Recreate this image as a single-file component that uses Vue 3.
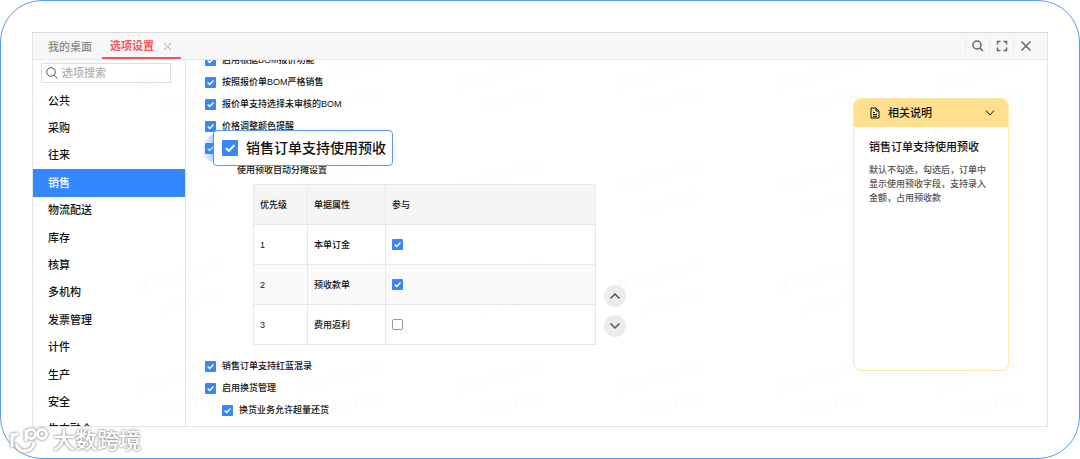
<script setup>
import { ref } from 'vue'

const menu = ['公共', '采购', '往来', '销售', '物流配送', '库存', '核算', '多机构', '发票管理', '计件', '生产', '安全', '生态融合']
const active = ref('销售')
const keyword = ref('')
const upper = ref([
  { label: '启用根据BOM报价功能', on: true },
  { label: '按照报价单BOM严格销售', on: true },
  { label: '报价单支持选择未审核的BOM', on: true },
  { label: '价格调整颜色提醒', on: true }
])
const lower = ref([
  { label: '销售订单支持红蓝混录', on: true },
  { label: '启用换货管理', on: true },
  { label: '换货业务允许超量还货', on: true, nested: true }
])
const advance = ref(true)
const rows = ref([
  { name: '本单订金', on: true },
  { name: '预收款单', on: true },
  { name: '费用返利', on: false }
])
</script>

<template>
  <div class="frame">
    <div class="window">
      <header class="tabs">
        <button class="tab" type="button">我的桌面</button>
        <div class="tab current">
          <button class="tab-name" type="button">选项设置</button>
          <button class="tab-close" type="button" aria-label="关闭标签">
            <svg width="9" height="9" viewBox="0 0 9 9"><path d="M1 1l7 7M8 1L1 8" /></svg>
          </button>
        </div>
        <div class="tools">
          <button type="button" aria-label="搜索">
            <svg width="12" height="12" viewBox="0 0 12 12"><circle cx="5" cy="5" r="4" /><path d="M8 8l3 3" /></svg>
          </button>
          <button type="button" aria-label="全屏">
            <svg width="12" height="12" viewBox="0 0 12 12"><path d="M1.5 4.5v-3h3M7.5 1.5h3v3M10.5 7.5v3h-3M4.5 10.5h-3v-3" /></svg>
          </button>
          <button type="button" aria-label="关闭">
            <svg width="12" height="12" viewBox="0 0 12 12"><path d="M1.5 1.5l9 9M10.5 1.5l-9 9" /></svg>
          </button>
        </div>
      </header>

      <div class="body">
        <svg class="stamp" aria-hidden="true">
          <defs>
            <pattern id="stamp" width="160" height="101" x="104" y="-6" patternUnits="userSpaceOnUse">
              <g transform="rotate(-15 0 40)">
                <text x="2" y="37">员工02009588</text>
                <text x="20" y="65">09251105</text>
              </g>
            </pattern>
          </defs>
          <rect width="100%" height="100%" fill="url(#stamp)" />
        </svg>

        <aside class="side">
          <label class="search">
            <svg width="12" height="12" viewBox="0 0 12 12"><circle cx="5" cy="5" r="4.3" /><path d="M8.2 8.2l3.3 3.3" /></svg>
            <input v-model="keyword" type="text" placeholder="选项搜索" aria-label="选项搜索" />
          </label>
          <nav class="menu">
            <button v-for="m in menu" :key="m" type="button" :class="{ active: m === active }" @click="active = m">{{ m }}</button>
          </nav>
        </aside>

        <main class="options">
          <label v-for="o in upper" :key="o.label" class="option">
            <input v-model="o.on" type="checkbox" /><span>{{ o.label }}</span>
          </label>
          <div class="option">
            <input v-model="advance" type="checkbox" aria-label="使用预收" />
            <label class="callout">
              <input v-model="advance" type="checkbox" /><span>销售订单支持使用预收</span>
            </label>
          </div>
          <div class="option caption">使用预收自动分摊设置</div>
          <div class="share">
            <table>
              <thead>
                <tr><th class="rank">优先级</th><th class="kind">单据属性</th><th>参与</th></tr>
              </thead>
              <tbody>
                <tr v-for="(r, i) in rows" :key="r.name">
                  <td>{{ i + 1 }}</td>
                  <td>{{ r.name }}</td>
                  <td><input v-model="r.on" type="checkbox" :aria-label="r.name" /></td>
                </tr>
              </tbody>
            </table>
            <div class="order">
              <button type="button" aria-label="上移"><svg width="12" height="8" viewBox="0 0 12 8"><path d="M1.5 6.500L6 2l4.500 4.500" /></svg></button>
              <button type="button" aria-label="下移"><svg width="12" height="8" viewBox="0 0 12 8"><path d="M1.5 1.500L6 6l4.500-4.500" /></svg></button>
            </div>
          </div>
          <div class="rest">
            <label v-for="o in lower" :key="o.label" class="option" :class="{ nested: o.nested }">
              <input v-model="o.on" type="checkbox" /><span>{{ o.label }}</span>
            </label>
          </div>
        </main>

        <section class="help">
          <header>
            <svg width="10" height="12" viewBox="0 0 10 12"><path d="M1 1h5l3 3v7H1zM6 1v3h3M3 5.500h2M3 7.500h4M3 9.300h4" /></svg>
            <h2>相关说明</h2>
            <button type="button" aria-label="收起"><svg width="10" height="8" viewBox="0 0 10 8"><path d="M1 1.500l4 4.500 4-4.500" /></svg></button>
          </header>
          <h3>销售订单支持使用预收</h3>
          <p>默认不勾选，勾选后，订单中显示使用预收字段，支持录入金额，占用预收款</p>
        </section>
      </div>
    </div>

    <div class="brand">
      <svg width="40" height="28" viewBox="0 0 40 28">
        <path d="M3 6v14M3 12q1-5 6-5M7 17q3 8 10 7 7-1 8-9" />
        <circle cx="22" cy="7" r="4.500" /><circle cx="33" cy="7" r="4.500" /><path d="M17 3v11" />
      </svg>
      <span>大数跨境</span>
    </div>
  </div>
</template>

<style>
body {
  margin: 0;
  background: #fff;
}
</style>

<style scoped>
.frame {
  position: relative;
  box-sizing: border-box;
  display: flex;
  height: 100vh;
  padding: 31px;
  border: 1px solid #5b9af0;
  border-radius: 42px;
  font: 500 9px/14px "Liberation Sans", "Noto Sans CJK SC", sans-serif;
  color: #111;
  background: #fff;
}
button {
  padding: 0;
  border: 0;
  background: none;
  font: inherit;
  color: inherit;
}
svg {
  flex: none;
  fill: none;
  stroke: currentColor;
}
.window {
  flex: 1;
  display: flex;
  flex-direction: column;
  border: 1px solid #e4e4e4;
  border-top-color: #d8d8d8;
  overflow: hidden;
}
.tabs {
  display: flex;
  height: 26px;
  border-bottom: 1px solid #e8e8e8;
  background: #f7f7f7;
  font-size: 11px;
}
.tab {
  padding: 2px 10px 0 15px;
  color: #888;
}
.tab.current {
  display: flex;
  align-items: center;
  gap: 9px;
  padding: 2px 9px 0 8px;
  border-bottom: 2px solid #f2555b;
  color: #f2555b;
}
.tab-name {
  font-weight: 700;
}
.tab-close {
  display: flex;
  color: #aaa;
}
.tools {
  display: flex;
  align-items: center;
  margin: 0 10px 0 auto;
}
.tools button {
  display: flex;
  align-items: center;
  justify-content: center;
  width: 24px;
  height: 18px;
  border-left: 1px solid #eee;
  color: #666;
}
.tools svg {
  stroke-width: 1.5;
}
.body {
  position: relative;
  flex: 1;
  display: flex;
  min-height: 0;
  overflow: hidden;
}
.stamp {
  position: absolute;
  inset: 0;
  width: 100%;
  height: 100%;
  stroke: none;
}
.stamp text {
  fill: #fbfbfb;
  font-size: 14px;
}
.side {
  position: relative;
  display: flex;
  flex-direction: column;
  width: 152px;
  border-right: 1px solid #e4e4e4;
  font-size: 11px;
}
.search {
  display: flex;
  align-items: center;
  gap: 4px;
  height: 18px;
  margin: 3px 14px 4px 8px;
  padding-left: 4px;
  border: 1px solid #ddd;
  color: #555;
}
.search input {
  flex: 1;
  min-width: 0;
  padding: 0;
  border: 0;
  outline: 0;
  background: none;
  font: inherit;
}
.search input::placeholder {
  color: #b0b0b0;
}
.menu {
  flex: 1;
  display: flex;
  flex-direction: column;
  margin-bottom: -17px;
}
.menu button {
  flex: 1;
  padding-left: 15px;
  text-align: left;
}
.menu button.active {
  background: #3388ff;
  color: #fff;
}
.options {
  position: relative;
  flex: 1;
  margin-top: -11px;
  padding-left: 19px;
}
.option {
  position: relative;
  display: flex;
  align-items: center;
  gap: 6px;
  height: 22px;
}
.option.caption {
  padding-left: 32px;
}
.option.nested {
  padding-left: 17px;
}
input[type="checkbox"] {
  appearance: none;
  flex: none;
  display: block;
  width: 11px;
  height: 11px;
  margin: 0;
  border: 1px solid #999;
  border-radius: 2px;
  background: #fff;
}
input[type="checkbox"]:checked {
  border: 0;
  border-radius: 1px;
  background: #3a86f7 url("data:image/svg+xml,%3Csvg xmlns='http://www.w3.org/2000/svg' viewBox='0 0 11 11'%3E%3Cpath d='M2.700 5.500l2 2 3.800-3.900' fill='none' stroke='white' stroke-width='1.400'/%3E%3C/svg%3E") center / 100%;
}
.callout {
  position: absolute;
  z-index: 1;
  left: 8px;
  top: -7px;
  display: flex;
  align-items: center;
  gap: 8px;
  height: 34px;
  padding: 0 6px 0 8px;
  border: 1px solid #5b9af0;
  border-radius: 4px;
  background: #fff;
  font-size: 14px;
  line-height: 20px;
  white-space: nowrap;
}
.callout::before {
  content: "";
  position: absolute;
  right: 100%;
  top: 2px;
  bottom: 2px;
  width: 11px;
  background: linear-gradient(to left, rgba(51, 136, 255, 0.4), rgba(51, 136, 255, 0.05));
  clip-path: polygon(100% 0, 0 30%, 0 80%, 100% 100%);
}
.callout input[type="checkbox"] {
  width: 16px;
  height: 16px;
}
.share {
  display: flex;
  align-items: flex-end;
  gap: 8px;
  margin: 3px 0 0 48px;
}
table {
  width: 343px;
  border-collapse: collapse;
  table-layout: fixed;
}
th,
td {
  box-sizing: border-box;
  height: 40px;
  padding: 0 6px;
  border: 1px solid #e8e8e8;
  font-weight: 500;
  text-align: left;
}
th {
  background: #f5f5f5;
}
.rank {
  width: 54px;
}
.kind {
  width: 78px;
}
tbody tr:nth-child(even) {
  background: #fafafa;
}
.order {
  display: flex;
  flex-direction: column;
  gap: 8px;
  padding-bottom: 8px;
}
.order button {
  display: flex;
  align-items: center;
  justify-content: center;
  width: 22px;
  height: 22px;
  border-radius: 50%;
  background: #ececec;
  color: #555;
}
.order svg {
  stroke-width: 1.5;
}
.rest {
  margin-top: 10px;
}
.help {
  position: relative;
  align-self: flex-start;
  box-sizing: border-box;
  width: 156px;
  min-height: 273px;
  margin: 38px 38px 0 0;
  border: 1px solid #ffe9ad;
  border-radius: 8px;
  background: #fff;
  overflow: hidden;
}
.help header {
  display: flex;
  align-items: center;
  gap: 8px;
  height: 28px;
  padding: 0 13px 0 16px;
  background: #ffe08f;
}
.help h2,
.help h3 {
  margin: 0;
  font-size: 11px;
  font-weight: 500;
}
.help header button {
  display: flex;
  margin-left: auto;
}
.help h3 {
  margin: 13px 15px 9px;
}
.help p {
  margin: 0 15px;
  color: #555;
}
.brand {
  position: absolute;
  left: 8px;
  bottom: 3px;
  display: flex;
  align-items: center;
  gap: 4px;
  color: #fff;
  font-size: 22px;
  line-height: 28px;
  filter: drop-shadow(0 0 1px #888) drop-shadow(0 0 1px #ccc);
}
.brand svg {
  stroke-width: 3;
}
</style>
